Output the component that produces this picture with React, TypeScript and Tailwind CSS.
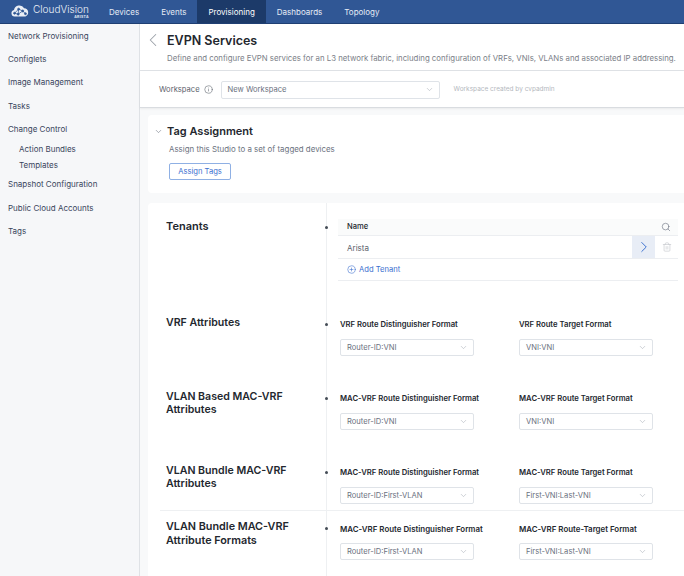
import { ChevronDown, ChevronLeft, ChevronRight, Info, Search, Trash2, CirclePlus } from 'lucide-react';

const tabs = ['Devices', 'Events', 'Provisioning', 'Dashboards', 'Topology'];

const sideItems = [
  { label: 'Network Provisioning', cls: 'h-[23.3px]' },
  { label: 'Configlets', cls: 'h-[23.3px]' },
  { label: 'Image Management', cls: 'h-[23.3px]' },
  { label: 'Tasks', cls: 'h-[23.3px]' },
  { label: 'Change Control', cls: 'h-[23px]' },
  { label: 'Action Bundles', cls: 'h-[17px] pl-[11px]' },
  { label: 'Templates', cls: 'h-[15px] pl-[11px]' },
  { label: 'Snapshot Configuration', cls: 'h-[24px]' },
  { label: 'Public Cloud Accounts', cls: 'h-[23.3px]' },
  { label: 'Tags', cls: 'h-[23.3px]' },
];

function Select({ value, className }: { value: string; className?: string }) {
  return (
    <div className={`flex h-[17px] items-center justify-between rounded-[2px] border border-[#dfe3e8] bg-white pl-[6px] pr-[5px] text-[7.6px] text-[#6b7280] ${className ?? 'w-[134px]'}`}>
      <span>{value}</span>
      <ChevronDown className="h-[9px] w-[9px] text-[#a9afb8]" strokeWidth={1.5} />
    </div>
  );
}

interface RowProps {
  title: string[];
  labels: [string, string];
  values: [string, string];
  height: string;
  top: string;
  titleCls: string;
  labelCls: string;
}

function FormatRow({ title, labels, values, height, top, titleCls, labelCls }: RowProps) {
  return (
    <div className={`flex ${height}`}>
      <div className={`w-[178px] shrink-0 pl-[18px] font-semibold text-[#23272e] ${titleCls}`}>
        {title.map((t) => (
          <div key={t}>{t}</div>
        ))}
      </div>
      <div className={`flex flex-1 gap-[45px] border-l border-[#eef0f2] pl-[13px] ${top}`}>
        {[0, 1].map((i) => (
          <div key={i} className="relative w-[134px]">
            {i === 0 && <span className="absolute left-[-15px] top-[3px] h-[3px] w-[3px] rounded-full bg-[#444b55]" />}
            <div className={`h-[10px] leading-[10px] font-semibold whitespace-nowrap text-[#23272e] ${labelCls}`}>{labels[i]}</div>
            <Select value={values[i]} className="mt-[9px] w-[134px]" />
          </div>
        ))}
      </div>
    </div>
  );
}

function Logo() {
  return (
    <svg width="20" height="13" viewBox="0 0 22 14" className="mb-[2px] shrink-0">
      <path d="M5 13.5a3.6 3.6 0 0 1-.6-7.1A6 6 0 0 1 15.6 4.600 4.600 4.600 0 0 1 17 13.5Z" fill="#e9eef6" />
      <g stroke="#2f5795" strokeWidth="0.8" fill="#2f5795">
        <path d="M5 10 9.500 5.500 14 7.500 17 10.500M9.500 5.500 9 11M14 7.500 9 11 5 10" fill="none" />
        <circle cx="5" cy="10" r="1.100" />
        <circle cx="9.500" cy="5.500" r="1.100" />
        <circle cx="14" cy="7.500" r="1.100" />
        <circle cx="9" cy="11" r="1.100" />
        <circle cx="17" cy="10.500" r="1.100" />
      </g>
    </svg>
  );
}

export default function App() {
  return (
    <div className="flex h-[576px] w-[684px] flex-col overflow-hidden bg-white [font-family:Inter,sans-serif]">
      <header className="flex h-[24px] shrink-0 items-stretch border-b border-[#1f3f73] bg-[#305795] text-[8px] text-[#e6ecf5]">
        <div className="flex w-[98px] shrink-0 items-center pl-[10px]">
          <Logo />
          <div className="ml-[3px] flex flex-col items-end">
            <span className="text-[10px] leading-[11px] font-light text-[#eef2f8]">CloudVision</span>
            <span className="text-[3.5px] leading-[4px] font-bold tracking-[0.3px]">ARISTA</span>
          </div>
        </div>
        {tabs.map((t) => (
          <div
            key={t}
            className={`flex items-center px-[11px] ${t === 'Provisioning' ? 'bg-[#1c3a69] text-white' : ''}`}
          >
            {t}
          </div>
        ))}
      </header>
      <div className="flex min-h-0 flex-1">
        <aside className="w-[140px] shrink-0 border-r border-[#dfe2e6] bg-[#f6f7f9] pl-[8px] text-[8px] text-[#39455c]">
          {sideItems.map((item) => (
            <div key={item.label} className={`flex items-center ${item.cls}`}>
              {item.label}
            </div>
          ))}
        </aside>
        <main className="flex min-w-0 flex-1 flex-col bg-[#f8f9fa]">
          <div className="flex h-[47px] shrink-0 border-b border-[#dfe2e6] bg-white">
            <ChevronLeft className="ml-[2px] mt-[5px] h-[22px] w-[22px] text-[#9aa0a8]" strokeWidth={1.1} />
            <div className="ml-[3px]">
              <h1 className="mt-[9px] text-[12.5px] leading-[16px] font-semibold text-[#23272e]">EVPN Services</h1>
              <p className="mt-[4px] text-[7.8px] leading-[10px] whitespace-nowrap text-[#7b8088]">
                Define and configure EVPN services for an L3 network fabric, including configuration of VRFs, VNIs, VLANs and associated IP addressing.
              </p>
            </div>
          </div>
          <div className="flex h-[37px] shrink-0 items-center border-b border-[#d9dce0] bg-white pl-[19px] pt-[1px] shadow-[0_1px_2px_rgba(0,0,0,0.06)]">
            <span className="text-[7.6px] text-[#5d636c]">Workspace</span>
            <Info className="ml-[4px] h-[9px] w-[9px] text-[#5d636c]" strokeWidth={1.5} />
            <Select value="New Workspace" className="ml-[8px] h-[18px] w-[219px]" />
            <span className="ml-[14px] text-[6.5px] text-[#b4b8be]">Workspace created by cvpadmin</span>
          </div>
          <section className="ml-[8px] mt-[7px] h-[78px] shrink-0 rounded-l-[4px] bg-white pt-[9px]">
            <div className="flex items-center">
              <ChevronDown className="ml-[6px] h-[9px] w-[9px] text-[#6b7280]" strokeWidth={1.5} />
              <h2 className="ml-[4px] text-[11px] leading-[14px] font-semibold text-[#23272e]">Tag Assignment</h2>
            </div>
            <p className="ml-[21px] mt-[6px] text-[7.9px] leading-[10px] text-[#6b7280]">Assign this Studio to a set of tagged devices</p>
            <button className="ml-[21px] mt-[9px] flex h-[17px] w-[62px] items-center justify-center rounded-[2px] border border-[#8fb0e4] text-[7.6px] text-[#3a6fcf]">
              Assign Tags
            </button>
          </section>
          <section className="ml-[8px] mt-[10px] min-h-0 flex-1 rounded-tl-[4px] bg-white">
            <div className="flex h-[98px]">
              <div className="w-[178px] shrink-0 pl-[18px] pt-[16px] text-[11px] leading-[14px] font-semibold text-[#23272e]">Tenants</div>
              <div className="relative flex-1 border-l border-[#eef0f2] pl-[11px] pr-[6px] pt-[16px]">
                <span className="absolute left-[-2px] top-[23px] h-[3px] w-[3px] rounded-full bg-[#444b55]" />
                <div className="flex h-[17px] items-center justify-between border-b border-[#eceef1] bg-[#fafbfb] pl-[9px] pr-[7px] text-[7.6px] font-medium text-[#23272e]">
                  <span>Name</span>
                  <Search className="h-[10px] w-[10px] text-[#6b7280]" strokeWidth={1.5} />
                </div>
                <div className="flex h-[23px] items-center border-b border-[#eceef1] pl-[9px] text-[8px] text-[#5d636c]">
                  <span className="flex-1 pt-[1px]">Arista</span>
                  <div className="flex h-full w-[23px] items-center justify-center bg-[#e8edf6]">
                    <ChevronRight className="h-[18px] w-[18px] text-[#3a6fcf]" strokeWidth={1.3} />
                  </div>
                  <div className="flex w-[23px] items-center justify-center">
                    <Trash2 className="h-[10px] w-[10px] text-[#c3c7cc]" strokeWidth={1.5} />
                  </div>
                </div>
                <div className="flex h-[22px] items-center gap-[3px] border-b border-[#eceef1] pl-[9px] text-[7.6px] text-[#3a6fcf]">
                  <CirclePlus className="h-[9px] w-[9px]" strokeWidth={1.5} />
                  Add Tenant
                </div>
              </div>
            </div>
            <FormatRow
              title={['VRF Attributes']}
              labels={['VRF Route Distinguisher Format', 'VRF Route Target Format']}
              values={['Router-ID:VNI', 'VNI:VNI']}
              height="h-[74px]"
              top="pt-[19px]"
              titleCls="pt-[15px] text-[10.6px] leading-[13px]"
              labelCls="text-[7.7px]"
            />
            <FormatRow
              title={['VLAN Based MAC-VRF', 'Attributes']}
              labels={['MAC-VRF Route Distinguisher Format', 'MAC-VRF Route Target Format']}
              values={['Router-ID:VNI', 'VNI:VNI']}
              height="h-[74px]"
              top="pt-[19px]"
              titleCls="pt-[15px] text-[10.6px] leading-[13px]"
              labelCls="text-[7.7px]"
            />
            <FormatRow
              title={['VLAN Bundle MAC-VRF', 'Attributes']}
              labels={['MAC-VRF Route Distinguisher Format', 'MAC-VRF Route Target Format']}
              values={['Router-ID:First-VLAN', 'First-VNI:Last-VNI']}
              height="h-[61px]"
              top="pt-[19px]"
              titleCls="pt-[15px] text-[10.6px] leading-[13px]"
              labelCls="text-[7.7px]"
            />
            <div className="ml-[12px] h-px bg-[#eef0f2]" />
            <FormatRow
              title={['VLAN Bundle MAC-VRF', 'Attribute Formats']}
              labels={['MAC-VRF Route Distinguisher Format', 'MAC-VRF Route-Target Format']}
              values={['Router-ID:First-VLAN', 'First-VNI:Last-VNI']}
              height="h-[66px]"
              top="pt-[13px]"
              titleCls="pt-[9px] text-[10.8px] leading-[14px]"
              labelCls="text-[7.9px]"
            />
          </section>
        </main>
      </div>
    </div>
  );
}
